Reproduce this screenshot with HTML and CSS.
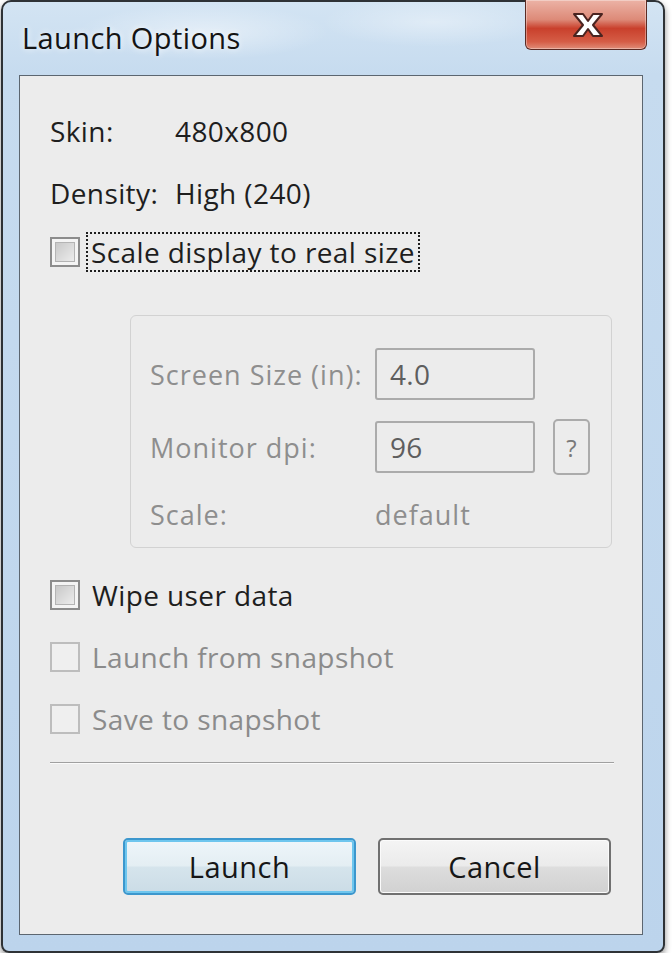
FILE: index.html
```html
<!DOCTYPE html>
<html>
<head>
<meta charset="utf-8">
<title>Launch Options</title>
<link rel="stylesheet" href="styles.css">
</head>
<body>
<div class="window">
  <div class="titlebar">
    <span class="title">Launch Options</span>
    <div class="close">
      <svg width="44" height="30" viewBox="0 0 44 30">
        <path d="M8 4 L17 4 L22 11 L27 4 L36 4 L27 15 L36 26 L27 26 L22 19 L17 26 L8 26 L17 15 Z" fill="#fff" stroke="#4a2420" stroke-width="2" stroke-linejoin="round"/>
      </svg>
    </div>
  </div>
  <div class="panel">
    <div class="info">
      <span>Skin:</span><span>480x800</span>
      <span>Density:</span><span>High (240)</span>
    </div>
    <label class="check first">
      <span class="box"></span><span class="label focus">Scale display to real size</span>
    </label>
    <div class="group">
      <div class="grow">
        <span class="glabel">Screen Size (in):</span>
        <span class="field">4.0</span>
      </div>
      <div class="grow">
        <span class="glabel">Monitor dpi:</span>
        <span class="field">96</span>
        <span class="qbtn">?</span>
      </div>
      <div class="grow short">
        <span class="glabel">Scale:</span>
        <span class="gval">default</span>
      </div>
    </div>
    <label class="check wipe">
      <span class="box"></span><span class="label">Wipe user data</span>
    </label>
    <label class="check disabled">
      <span class="box"></span><span class="label">Launch from snapshot</span>
    </label>
    <label class="check disabled">
      <span class="box"></span><span class="label">Save to snapshot</span>
    </label>
    <div class="sep"></div>
    <div class="buttons">
      <span class="btn default">Launch</span>
      <span class="btn">Cancel</span>
    </div>
  </div>
</div>
</body>
</html>
```

FILE: styles.css
```css
html, body {
  margin: 0;
  padding: 0;
  background: #ffffff;
}
body {
  font-family: "Open Sans", "Noto Sans", sans-serif;
  color: #1e1e1e;
}
.window {
  box-sizing: border-box;
  margin-left: 1px;
  width: 664px;
  height: 953px;
  border: 2px solid #2e3236;
  border-radius: 10px 10px 8px 8px;
  background:
    radial-gradient(ellipse 180px 40px at 200px 30px, rgba(255,255,255,0.45), rgba(255,255,255,0) 70%),
    radial-gradient(ellipse 160px 36px at 430px 20px, rgba(255,255,255,0.35), rgba(255,255,255,0) 70%),
    linear-gradient(180deg, #d3e4f3 0px, #c6dbef 73px, #bcd4ec 100%);
  box-shadow: 0 3px 6px rgba(0,0,0,0.45);
  display: flex;
  flex-direction: column;
  padding: 0 20px 16px 16px;
}
.titlebar {
  height: 73px;
  display: flex;
  justify-content: space-between;
  align-items: flex-start;
  margin-left: -16px;
  margin-right: -4px;
}
.title {
  font-size: 29px;
  line-height: 30px;
  letter-spacing: 0.4px;
  margin-top: 21px;
  margin-left: 19px;
  color: #141414;
  text-shadow: 0 0 6px rgba(255,255,255,0.9);
}
.close {
  box-sizing: border-box;
  width: 122px;
  height: 50px;
  margin-top: -2px;
  margin-right: 0;
  border: 1px solid #5a2b24;
  border-top: none;
  border-radius: 0 0 6px 6px;
  background: linear-gradient(180deg, #ecb3a6 0%, #dd8a78 40%, #c9402c 58%, #d55d46 85%, #e08d78 100%);
  box-shadow: inset 0 0 0 1px rgba(255,255,255,0.35);
  display: flex;
  align-items: center;
  justify-content: center;
  padding-left: 4px;
}
.panel {
  flex: 1;
  box-sizing: border-box;
  border: 1px solid #5c6670;
  background: #ececec;
  padding: 0 28px 0 30px;
  display: flex;
  flex-direction: column;
}
.info {
  margin-top: 35px;
  display: grid;
  grid-template-columns: 125px auto;
  row-gap: 22px;
  font-size: 28px;
  letter-spacing: 0.4px;
  line-height: 40px;
}
.check {
  display: flex;
  align-items: center;
  height: 40px;
  font-size: 28px;
  letter-spacing: 0.4px;
  margin-top: 22px;
}
.check.first {
  margin-top: 19px;
}
.check.wipe {
  margin-top: 27px;
}
.box {
  box-sizing: border-box;
  width: 30px;
  height: 30px;
  border: 2px solid #8c8c8c;
  background: #f4f4f4;
  padding: 3px;
  margin-right: 12px;
  flex: none;
}
.box::before {
  content: "";
  display: block;
  width: 100%;
  height: 100%;
  background: linear-gradient(135deg, #c8c8c8, #ececec);
  border: 1px solid #b4b4b4;
  box-sizing: border-box;
}
.check.disabled .box {
  border-color: #bdbdbd;
  background: #efefef;
}
.check.disabled .box::before {
  background: #efefef;
  border-color: #efefef;
}
.check.disabled {
  color: #8b8b8b;
}
.label.focus {
  margin-left: -6px;
  padding: 0 3px;
  height: 36px;
  line-height: 36px;
  border: 2px dotted #1e1e1e;
}
.group {
  box-sizing: border-box;
  margin-top: 43px;
  margin-left: 80px;
  width: 482px;
  height: 233px;
  border: 1px solid #d2d2d2;
  border-radius: 6px;
  padding: 32px 0 0 19px;
  display: flex;
  flex-direction: column;
  gap: 21px;
  color: #8e8e8e;
  font-size: 27px;
  letter-spacing: 1px;
}
.grow {
  display: flex;
  align-items: center;
  height: 52px;
}
.grow.short {
  height: 40px;
}
.glabel {
  width: 225px;
  flex: none;
}
.field {
  box-sizing: border-box;
  width: 160px;
  height: 52px;
  border: 2px solid #ababab;
  border-radius: 3px;
  background: #ececec;
  padding-left: 13px;
  line-height: 48px;
  color: #5e5e5e;
  font-size: 28px;
  letter-spacing: 0.3px;
}
.qbtn {
  box-sizing: border-box;
  margin-left: 18px;
  width: 37px;
  height: 56px;
  border: 2px solid #ababab;
  border-radius: 5px;
  background: #ececec;
  display: flex;
  align-items: center;
  justify-content: center;
  color: #7a7a7a;
  font-size: 24px;
  letter-spacing: 0;
}
.gval {
  color: #8e8e8e;
}
.sep {
  margin-top: 23px;
  height: 1px;
  background: #a0a0a0;
  border-bottom: 1px solid #fafafa;
}
.buttons {
  margin-top: 74px;
  display: flex;
  justify-content: flex-end;
  gap: 22px;
  padding-right: 3px;
}
.btn {
  box-sizing: border-box;
  width: 233px;
  height: 57px;
  border: 2px solid #707070;
  border-radius: 5px;
  background: linear-gradient(180deg, #f4f4f4 0%, #ebebeb 48%, #dddddd 52%, #d1d1d1 100%);
  box-shadow: inset 0 0 0 1px #fbfbfb;
  display: flex;
  align-items: center;
  justify-content: center;
  font-size: 29px;
  letter-spacing: 0.5px;
  color: #161616;
}
.btn.default {
  border-color: #3c97cd;
  box-shadow: inset 0 0 0 2px #6ec6ee;
  background: linear-gradient(180deg, #eef6fa 0%, #e4eef3 48%, #d5e4ec 52%, #cbdce6 100%);
}
```
